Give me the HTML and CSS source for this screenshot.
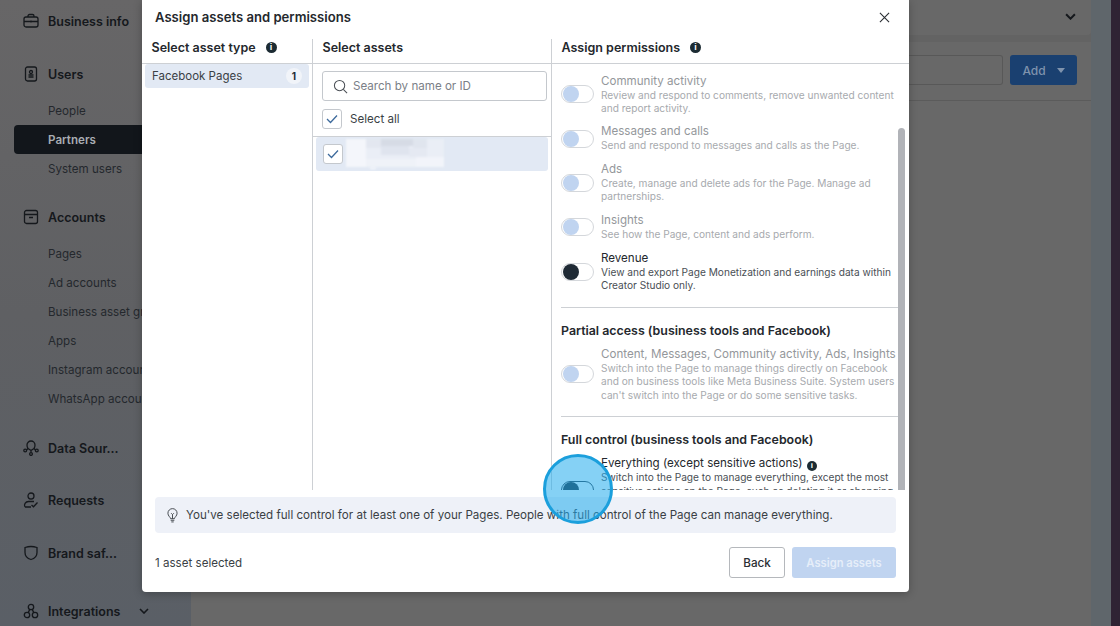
FILE: index.html
```html
<!DOCTYPE html>
<html lang="en">
<head>
    <meta charset="UTF-8">
    <title>Assign assets and permissions</title>
    <link rel="stylesheet" href="styles.css">
</head>
<body>
    <div class="page">
        <nav class="sidebar">
            <div class="nav-head first">
                <svg class="nav-icon" viewBox="0 0 16 16"><rect x="1" y="4" width="14" height="10" rx="2"/><path d="M5 4V3a1.500 1.500 0 0 1 1.500-1.500h3A1.500 1.500 0 0 1 11 3v1M1 8.500h14M8 7.500v2"/></svg>
                <span>Business info</span>
            </div>
            <div class="nav-head users">
                <svg class="nav-icon" viewBox="0 0 16 16"><rect x="2.500" y="1" width="11" height="14" rx="2"/><circle cx="8" cy="6" r="1.500"/><path d="M5.500 11h5M5.500 9h5"/></svg>
                <span>Users</span>
            </div>
            <a class="nav-sub">People</a>
            <a class="nav-sub active">Partners</a>
            <a class="nav-sub">System users</a>
            <div class="nav-head accounts">
                <svg class="nav-icon" viewBox="0 0 16 16"><rect x="1.500" y="1.500" width="13" height="13" rx="2"/><path d="M1.500 5.500h13M6 8.500h4"/></svg>
                <span>Accounts</span>
            </div>
            <a class="nav-sub">Pages</a>
            <a class="nav-sub">Ad accounts</a>
            <a class="nav-sub">Business asset groups</a>
            <a class="nav-sub">Apps</a>
            <a class="nav-sub">Instagram accounts</a>
            <a class="nav-sub">WhatsApp accounts</a>
            <div class="nav-head data">
                <svg class="nav-icon" viewBox="0 0 16 16"><path d="M5 8.500C4.200 7.500 4 6.500 4 5a4 4 0 0 1 8 0c0 1.500-.2 2.500-1 3.500M5 8.500l3 2 3-2M8 10.500v2"/><circle cx="2.200" cy="10.500" r="1.400"/><circle cx="13.800" cy="10.500" r="1.400"/><circle cx="8" cy="14" r="1.400"/><path d="M3.500 10 5 8.500M12.500 10 11 8.500"/></svg>
                <span>Data Sour...</span>
            </div>
            <div class="nav-head requests">
                <svg class="nav-icon" viewBox="0 0 16 16"><circle cx="8" cy="4" r="3"/><path d="M2 15c-1.500-2.500.5-5.500 3.500-5.500H11M8.500 13l2 1.800 4-4.300M2 15h6"/></svg>
                <span>Requests</span>
            </div>
            <div class="nav-head brand">
                <svg class="nav-icon" viewBox="0 0 16 16"><path d="M2 2.500c4-1.300 8-1.300 12 0v5c0 3.500-2.500 6-6 7-3.500-1-6-3.500-6-7z"/></svg>
                <span>Brand saf...</span>
            </div>
            <div class="nav-head integrations">
                <svg class="nav-icon" viewBox="0 0 16 16"><circle cx="8" cy="4" r="2.700"/><circle cx="4" cy="12" r="2.700"/><circle cx="12" cy="12" r="2.700"/><path d="M6.800 6.400 5.200 9.600M9.200 6.400l1.600 3.200"/></svg>
                <span>Integrations</span>
                <svg class="nav-chevron" viewBox="0 0 10 6"><path d="M1 1l4 4 4-4"/></svg>
            </div>
        </nav>

        <main class="main">
            <div class="card top-card">
                <svg class="top-chevron" viewBox="0 0 10 6"><path d="M1 1l4 4 4-4"/></svg>
            </div>
            <div class="card tools-card">
                <div class="fake-input"></div>
                <div class="add-btn">Add <i class="caret"></i></div>
            </div>
            <div class="card rest-card"></div>
        </main>
        <div class="strip"></div>
        <div class="edge"></div>
    </div>

    <section class="modal">
        <header class="modal-head">
            <h1>Assign assets and permissions</h1>
            <svg class="close" viewBox="0 0 12 12"><path d="M1 1l10 10M11 1 1 11"/></svg>
        </header>

        <div class="columns">
            <div class="col col-type">
                <div class="col-head">Select asset type <i class="info">i</i></div>
                <div class="type-row">
                    <span>Facebook Pages</span>
                    <b class="count">1</b>
                </div>
            </div>

            <div class="col col-assets">
                <div class="col-head">Select assets</div>
                <div class="search">
                    <svg class="search-icon" viewBox="0 0 16 16"><circle cx="7" cy="7" r="5.500"/><path d="M11 11l4 4"/></svg>
                    <span>Search by name or ID</span>
                </div>
                <div class="select-all">
                    <span class="check"><svg viewBox="0 0 12 10"><path d="M1 5l3.500 3.500L11 1.500"/></svg></span>
                    <span>Select all</span>
                </div>
                <div class="asset-row">
                    <span class="check"><svg viewBox="0 0 12 10"><path d="M1 5l3.500 3.500L11 1.500"/></svg></span>
                    <svg class="blur-name" viewBox="0 0 98 30" shape-rendering="crispEdges">
                        <rect width="98" height="28" fill="#eaeef6"/>
                        <rect width="20" height="28" fill="#f4f6fb"/>
                        <rect x="20" width="15" height="9" fill="#e3e7f0"/>
                        <rect x="35" width="32" height="7" fill="#d6dbe5"/>
                        <rect x="67" width="14" height="9" fill="#e0e5ee"/>
                        <rect x="35" y="7" width="28" height="9" fill="#dfe4ee"/>
                        <rect x="63" y="9" width="18" height="9" fill="#e5e9f2"/>
                        <rect x="20" y="20" width="50" height="8" fill="#eff2f8"/>
                        <rect x="70" y="18" width="28" height="10" fill="#f2f4fa"/>
                        <rect x="24" y="29" width="6" height="1" fill="#fff"/>
                    </svg>
                </div>
            </div>

            <div class="col col-perms">
                <div class="col-head">Assign permissions <i class="info">i</i></div>
                <div class="perm-scroll">
                    <div class="scrollbar"></div>
                    <div class="perm off">
                        <span class="toggle"></span>
                        <div><h3>Community activity</h3><p>Review and respond to comments, remove unwanted content and report activity.</p></div>
                    </div>
                    <div class="perm off">
                        <span class="toggle"></span>
                        <div><h3>Messages and calls</h3><p>Send and respond to messages and calls as the Page.</p></div>
                    </div>
                    <div class="perm off">
                        <span class="toggle"></span>
                        <div><h3>Ads</h3><p>Create, manage and delete ads for the Page. Manage ad partnerships.</p></div>
                    </div>
                    <div class="perm off">
                        <span class="toggle"></span>
                        <div><h3>Insights</h3><p>See how the Page, content and ads perform.</p></div>
                    </div>
                    <div class="perm">
                        <span class="toggle dark"></span>
                        <div><h3>Revenue</h3><p>View and export Page Monetization and earnings data within Creator Studio only.</p></div>
                    </div>
                    <hr>
                    <h2>Partial access (business tools and Facebook)</h2>
                    <div class="perm off">
                        <span class="toggle"></span>
                        <div><h3>Content, Messages, Community activity, Ads, Insights</h3><p>Switch into the Page to manage things directly on Facebook and on business tools like Meta Business Suite. System users can't switch into the Page or do some sensitive tasks.</p></div>
                    </div>
                    <hr>
                    <h2>Full control (business tools and Facebook)</h2>
                    <div class="perm full">
                        <span class="toggle dark"></span>
                        <div><h3>Everything (except sensitive actions) <i class="info small">i</i></h3><p>Switch into the Page to manage everything, except the most sensitive actions on the Page, such as deleting it or changing who can access it. System users can't switch into the Page or do some sensitive tasks.</p></div>
                    </div>
                </div>
            </div>
        </div>

        <div class="notice">
            <svg class="bulb" viewBox="0 0 12 16"><path d="M4 11.500C3.500 9.500 1 8.500 1 5.500a5 5 0 0 1 10 0c0 3-2.500 4-3 6zM4 13.200h4M4.700 15h2.600M6 11.500V7L4.500 5.500M6 7l1.500-1.500"/></svg>
            <span>You've selected full control for at least one of your Pages. People with full control of the Page can manage everything.</span>
        </div>

        <footer class="modal-foot">
            <span>1 asset selected</span>
            <div class="foot-btns">
                <button class="btn back">Back</button>
                <button class="btn assign">Assign assets</button>
            </div>
        </footer>
    </section>

    <div class="touch"></div>
</body>
</html>
```

FILE: styles.css
```css
* {box-sizing:border-box}
html, body {margin:0; padding:0; height:626px; overflow:hidden}
body {font-family:Inter, "Liberation Sans", sans-serif; font-size:11.600px; color:#2a2e33; background:#656565}

.page {display:flex; height:626px}

/* sidebar */
.sidebar {width:191px; flex:none; padding-left:14px; background:linear-gradient(180deg, #676667 0%, #5f6063 50%, #5a5f66 100%); white-space:nowrap; overflow:hidden}
.nav-head {display:flex; align-items:center; height:20px; padding-left:9px; font-weight:600; font-size:12.500px; color:#15181c}
.nav-head span {margin-left:9px}
.nav-icon {width:16px; height:16px; fill:none; stroke:#15181c; stroke-width:1.300}
.nav-chevron {width:10px; height:6px; margin-left:19px; fill:none; stroke:#15181c; stroke-width:1.600}
.first {margin-top:11px}
.users {margin-top:33px; margin-bottom:12px}
.accounts {margin-top:24px; margin-bottom:12px}
.data {margin-top:25px}
.requests {margin-top:32px}
.brand {margin-top:33px}
.integrations {margin-top:38px}
.nav-sub {display:block; height:29px; line-height:30px; padding-left:34px; font-size:11.600px; color:#24282d; border-radius:4px 0 0 4px}
.nav-sub.active {background:#12161b; color:#a9adb2; font-weight:600}

/* background behind the dialog */
.main {flex:1; display:flex; flex-direction:column; background:#636363}
.card {background:#686868}
.top-card {height:35px; display:flex; justify-content:flex-end; align-items:center; padding-right:15px; padding-bottom:3px; border-radius:0 0 4px 4px}
.top-chevron {width:11px; height:7px; fill:none; stroke:#15181c; stroke-width:1.800}
.tools-card {height:59px; margin-top:7px; display:flex; justify-content:flex-end; align-items:center; padding:0 14px 2px; gap:7px; border-bottom:1px solid #5b5b5b}
.fake-input {width:94px; height:30px; border:1px solid #585858; border-left:none; border-radius:0 3px 3px 0}
.add-btn {width:67px; height:30px; display:flex; align-items:center; justify-content:center; gap:11px; background:#1a4070; color:#7f93ad; font-size:12px; font-weight:500; border-radius:3px}
.caret {width:0; height:0; border:4px solid transparent; border-top:5px solid #7f93ad; border-bottom:none}
.rest-card {height:0; flex:1}
.strip {width:20px; flex:none; background:#5f666b}
.edge {width:9px; flex:none; background:#2f2334}

/* dialog */
.modal {position:absolute; left:142px; top:0; width:767px; height:592px; background:#fff; border-radius:0 0 4px 4px; box-shadow:0 2px 8px rgba(0,0,0,.25); display:flex; flex-direction:column}
.modal-head {height:39px; flex:none; display:flex; justify-content:space-between; align-items:center; padding:0 19px 5px 13px}
.modal-head h1 {margin:0; font-size:13.100px; font-weight:600; color:#24282d}
.close {width:11px; height:11px; fill:none; stroke:#2a2e33; stroke-width:1.200}

.columns {display:flex; height:451px; flex:none}
.col {height:100%}
.col-type {width:171px; border-right:1px solid #cdd0d4}
.col-assets {width:239px; border-right:1px solid #cdd0d4}
.col-perms {flex:1; min-width:0}
.col-head {height:25px; display:flex; align-items:center; padding:0 9.500px 8px; font-size:12.500px; font-weight:600; color:#24282d; border-bottom:1px solid #cdd0d4}
.info {display:inline-block; flex:none; width:11px; height:11px; margin-left:10px; border-radius:50%; background:#1c2b33; color:#fff; font:700 9px/11px "Liberation Sans", sans-serif; text-align:center}
.info.small {width:10px; height:10px; margin-left:1px; font-size:8px; line-height:10px; vertical-align:-1px}

.type-row {height:24px; margin:0 3px; padding:0 7px; display:flex; justify-content:space-between; align-items:center; background:#e2e9f4; border-radius:3px; font-size:11.500px; color:#3a3f45}
.count {width:16px; height:16px; border-radius:50%; background:#f1f4f9; font-size:10px; line-height:16px; text-align:center; font-weight:700; color:#1c2b33}

.search {height:30px; margin:7px 4px 0 9px; padding-left:10px; display:flex; align-items:center; gap:5px; border:1px solid #c4c8cd; border-radius:3px; color:#7b8087}
.search-icon {width:15px; height:15px; fill:none; stroke:#4a4f55; stroke-width:1.100}
.select-all {height:36px; padding:1px 0 0 9px; display:flex; align-items:center; gap:8px; border-bottom:1px solid #cdd0d4; color:#3a3f45}
.check {width:20px; height:20px; display:flex; align-items:center; justify-content:center; flex:none; background:#fff; border:1px solid #c4c8cd; border-radius:3px}
.check svg {width:12px; height:10px; fill:none; stroke:#3d6a9c; stroke-width:1.300}
.asset-row {height:34px; margin:0 3px; padding-left:7px; display:flex; align-items:center; gap:3px; background:#e2e9f4; border-radius:3px}
.blur-name {width:98px; height:30px; flex:none; filter:blur(1px)}

.perm-scroll {position:relative; height:426px; padding:9.500px 0 0 9px; overflow:hidden}
.scrollbar {position:absolute; right:4px; top:64px; bottom:0; width:7px; background:#b1b3b8; border-radius:4px 4px 0 0}
.perm {display:flex; align-items:center; gap:7px; width:337px; margin-bottom:9.400px; font-size:10.150px; line-height:13.300px}
.perm > div {flex:1; min-width:0}
.perm h3 {margin:0; font-size:11.600px; line-height:15px; font-weight:400; color:#24282d; white-space:nowrap}
.perm p {margin:0; color:#4a4f55}
.perm.off h3 {color:#94979b}
.perm.off p {color:#a7aaae}
.toggle {position:relative; flex:none; width:33px; height:18px; border:1px solid #d4d7db; border-radius:9px; background:#fff}
.toggle::after {content:""; position:absolute; left:1px; top:0; width:16px; height:16px; border-radius:50%; background:#c0d4f0}
.toggle.dark::after {background:#1f2a35}
.full .toggle {border-color:#2b3a48}
.perm-scroll hr {width:337px; margin:14.500px 0 15px; border:none; border-top:1px solid #cdd0d4}
.perm-scroll h2 {margin:0 0 8px; font-size:12.400px; line-height:16px; font-weight:600; color:#24282d}
.perm.full {margin-bottom:0}

/* bottom of the dialog */
.notice {height:36px; margin:7px 13px 0; padding-left:12px; display:flex; align-items:center; gap:8px; flex:none; background:#eef1f8; border-radius:4px; color:#3a3f45; white-space:nowrap}
.bulb {width:11px; height:15px; fill:none; stroke:#3a3f45; stroke-width:1}
.modal-foot {flex:1; display:flex; justify-content:space-between; align-items:center; padding:0 13px; color:#3a3f45}
.foot-btns {display:flex; gap:7px}
.btn {height:31px; padding:0; border-radius:3px; font:500 11.700px Inter, "Liberation Sans", sans-serif}
.back {width:56px; background:#fff; border:1px solid #b5b8bc; color:#2a2e33}
.assign {width:104px; background:#c0d4f0; border:none; color:#e6eef9; font-size:11.200px; font-weight:600}

/* recorded tap marker */
.touch {position:absolute; left:543px; top:454px; width:70px; height:70px; border-radius:50%; background:rgba(33,171,236,.55); border:3px solid #1b9fdc}
```
